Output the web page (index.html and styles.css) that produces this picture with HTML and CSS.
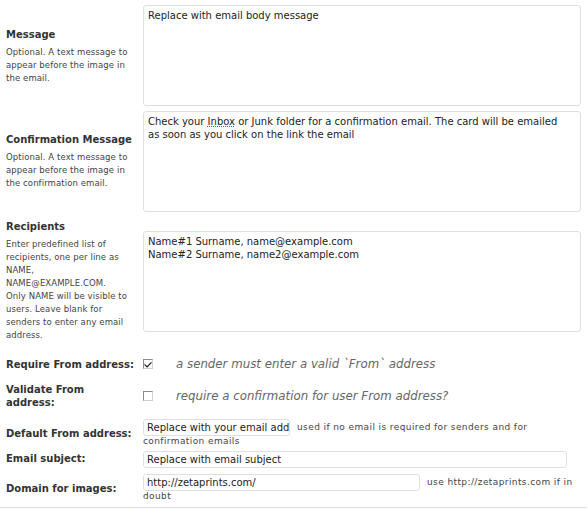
FILE: index.html
```html
<!DOCTYPE html>
<html>
<head>
<meta charset="utf-8">
<link rel="stylesheet" href="styles.css">
</head>
<body>
<div class="form">
  <div class="row r1">
    <div class="label">
      <div class="title">Message</div>
      <div class="desc">Optional. A text message to appear before the image in the email.</div>
    </div>
    <div class="field"><div class="textarea">Replace with email body message</div></div>
  </div>
  <div class="row r2">
    <div class="label">
      <div class="title">Confirmation Message</div>
      <div class="desc">Optional. A text message to appear before the image in the confirmation email.</div>
    </div>
    <div class="field"><div class="textarea">Check your <span class="spell">Inbox</span> or Junk folder for a confirmation email. The card will be emailed as soon as you click on the link the email</div></div>
  </div>
  <div class="row r3">
    <div class="label">
      <div class="title">Recipients</div>
      <div class="desc">Enter predefined list of recipients, one per line as NAME,<br>NAME@EXAMPLE.COM.<br>Only NAME will be visible to users. Leave blank for senders to enter any email address.</div>
    </div>
    <div class="field"><div class="textarea">Name#1 Surname, name@example.com<br>Name#2 Surname, name2@example.com</div></div>
  </div>
  <div class="row r4">
    <div class="label"><div class="title">Require From address:</div></div>
    <div class="field check-field">
      <span class="checkbox checked"><svg width="8" height="8" viewBox="0 0 8 8"><path d="M0.5 3.5 L3 6 L7.5 1.5 L7.5 3.2 L3 7.7 L0.5 5.2 Z" fill="#222"/></svg></span>
      <span class="hint">a sender must enter a valid `From` address</span>
    </div>
  </div>
  <div class="row r5">
    <div class="label"><div class="title">Validate From<br>address:</div></div>
    <div class="field check-field">
      <span class="checkbox"></span>
      <span class="hint">require a confirmation for user From address?</span>
    </div>
  </div>
  <div class="row r6">
    <div class="label"><div class="title">Default From address:</div></div>
    <div class="field inline-field"><span class="input w-from">Replace with your email add</span><span class="note">used if no email is required for senders and for</span><br><span class="note-cont">confirmation emails</span></div>
  </div>
  <div class="row r7">
    <div class="label"><div class="title">Email subject:</div></div>
    <div class="field"><span class="input w-subject">Replace with email subject</span></div>
  </div>
  <div class="row r8">
    <div class="label"><div class="title">Domain for images:</div></div>
    <div class="field inline-field"><span class="input w-domain">http://zetaprints.com/</span><span class="note">use http://zetaprints.com if in</span><br><span class="note-cont">doubt</span></div>
  </div>
</div>
</body>
</html>
```

FILE: styles.css
```css
html, body {
  margin: 0;
  padding: 0;
  background: #fff;
}
body {
  font-family: "DejaVu Sans", Verdana, sans-serif;
  color: #333;
  width: 587px;
  height: 509px;
  overflow: hidden;
}
.form {
  padding: 5px 6px 5px 6px;
  border-bottom: 1px solid #dfdfdf;
}
.row {
  display: grid;
  grid-template-columns: 137px 438px;
  align-items: center;
}
.r1 { padding-top: 1px; }
.r2 { margin-top: 5px; }
.r3 { margin-top: 8px; }
.r4 { margin-top: 15px; }
.r5 { margin-top: 12px; }
.r6 { margin-top: 10px; }
.r7 { margin-top: 2px; }
.r8 { margin-top: 6px; }
.r1 .field { margin-top: -1px; }
.title {
  font-weight: bold;
  font-size: 10px;
  line-height: 13px;
  color: #333;
}
.desc {
  margin-top: 5px;
  width: 131px;
  font-size: 8.5px;
  letter-spacing: 0.1px;
  line-height: 13px;
  color: #444;
}
.textarea {
  box-sizing: border-box;
  height: 101px;
  border: 1px solid #dfdfdf;
  border-radius: 3px;
  padding: 3px 20px 3px 4px;
  font-size: 10px;
  line-height: 13px;
  color: #222;
}
.spell {
  text-decoration: underline dotted #d33;
}
.check-field {
  display: flex;
  align-items: center;
}
.checkbox {
  box-sizing: border-box;
  width: 10px;
  height: 10px;
  border: 1px solid #8c8c8c;
  border-right-color: #d0d0d0;
  border-bottom-color: #d0d0d0;
  display: inline-flex;
  align-items: center;
  justify-content: center;
  background: #fff;
  margin-right: 23px;
}
.hint {
  font-style: italic;
  font-size: 11.8px;
  color: #666;
}
.inline-field {
  font-size: 9px;
  line-height: 11px;
  letter-spacing: 0.4px;
  color: #444;
}
.input {
  box-sizing: border-box;
  display: inline-block;
  height: 17px;
  border: 1px solid #dfdfdf;
  border-radius: 3px;
  padding: 0 3px;
  font-size: 10px;
  line-height: 15px;
  letter-spacing: 0;
  color: #222;
  white-space: nowrap;
  overflow: hidden;
  vertical-align: middle;
}
.w-from { width: 147px; }
.w-subject { width: 424px; }
.w-domain { width: 277px; }
.note {
  margin-left: 7px;
  vertical-align: middle;
}
```
